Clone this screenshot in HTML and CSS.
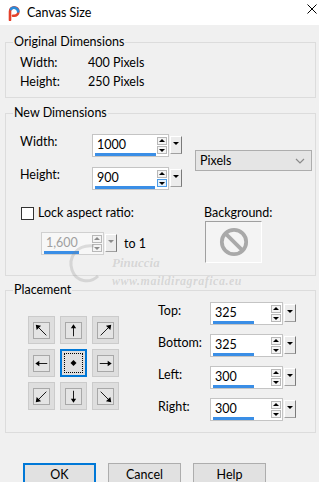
FILE: index.html
```html
<html>
  <head>
    <meta name="viewport" content="width=device-width, initial-scale=1" />
    <link rel="stylesheet" href="styles.css">
  </head>
  <body>
    <div class="dialog">
      <div class="titlebar">
        <svg class="app-icon" viewBox="0 0 13 16">
          <path d="M3 15 V6.5 a4.2 4.2 0 1 1 4.2 4.2 H6" fill="none" stroke="#e4412b" stroke-width="2.6" stroke-linecap="round"/>
          <path d="M4 4 a4.2 4.2 0 0 1 7.2 2.5" fill="none" stroke="#2a8ad8" stroke-width="2.6" stroke-linecap="round"/>
        </svg>
        <span class="title">Canvas Size</span>
        <svg class="close" viewBox="0 0 10 10">
          <path d="M0.5 0.5 L9.5 9.5 M9.5 0.5 L0.5 9.5" stroke="#000" stroke-width="1"/>
        </svg>
      </div>

      <fieldset class="group group-original">
        <legend>Original Dimensions</legend>
        <div class="info-grid">
          <span>Width:</span><span>400 Pixels</span>
          <span>Height:</span><span>250 Pixels</span>
        </div>
      </fieldset>

      <fieldset class="group group-new">
        <legend>New Dimensions</legend>
        <div class="size-grid">
          <span class="field-label">Width:</span>
          <div class="spin">
            <div class="spin-field">
              <div class="spin-main">
                <span class="spin-value">1000</span>
                <span class="spin-bar" style="width: 61px"></span>
              </div>
              <span class="spin-arrows"><i class="arrow-up"></i><i class="arrow-down"></i></span>
            </div>
            <span class="spin-drop"><i></i></span>
          </div>
          <div class="select">
            <span>Pixels</span>
            <svg class="chevron" viewBox="0 0 10 6"><path d="M1 1 L5 5 L9 1" fill="none" stroke="#8a8a8a" stroke-width="1.2"/></svg>
          </div>
          <span class="field-label">Height:</span>
          <div class="spin">
            <div class="spin-field">
              <div class="spin-main">
                <span class="spin-value">900</span>
                <span class="spin-bar" style="width: 60px"></span>
              </div>
              <span class="spin-arrows"><i class="arrow-up"></i><i class="arrow-down hot"></i></span>
            </div>
            <span class="spin-drop"><i></i></span>
          </div>
        </div>

        <div class="aspect-row">
          <div class="aspect">
            <div class="check"><span class="check-box"></span><span>Lock aspect ratio:</span></div>
            <div class="ratio">
              <div class="spin spin-disabled">
                <div class="spin-field">
                  <div class="spin-main">
                    <span class="spin-value">1,600</span>
                    <span class="spin-bar" style="width: 35px"></span>
                  </div>
                  <span class="spin-arrows"><i class="arrow-up"></i><i class="arrow-down"></i></span>
                </div>
                <span class="spin-drop"><i></i></span>
              </div>
              <span>to 1</span>
            </div>
          </div>
          <div class="background">
            <span>Background:</span>
            <div class="swatch">
              <svg viewBox="0 0 32 32" class="no-sign">
                <circle cx="16" cy="16" r="13" fill="none" stroke="#a9a9a9" stroke-width="4"/>
                <path d="M7 7 L25 25" stroke="#a9a9a9" stroke-width="4"/>
              </svg>
            </div>
          </div>
        </div>
      </fieldset>

      <fieldset class="group group-placement">
        <legend>Placement</legend>
        <div class="placement">
          <div class="anchor-grid">
            <div class="anchor"><span class="anchor-inner"><svg viewBox="0 0 17 17"><path d="M14 14 L3 3" stroke="#000"/><path d="M2 2 L8 3 L3 8 Z" fill="#000"/></svg></span></div>
            <div class="anchor"><span class="anchor-inner"><svg viewBox="0 0 17 17"><path d="M8.5 15 L8.5 4" stroke="#000"/><path d="M8.5 1.5 L11.5 6 L5.5 6 Z" fill="#000"/></svg></span></div>
            <div class="anchor"><span class="anchor-inner"><svg class="rot-90" viewBox="0 0 17 17"><path d="M14 14 L3 3" stroke="#000"/><path d="M2 2 L8 3 L3 8 Z" fill="#000"/></svg></span></div>
            <div class="anchor"><span class="anchor-inner"><svg class="rot-270" viewBox="0 0 17 17"><path d="M8.5 15 L8.5 4" stroke="#000"/><path d="M8.5 1.5 L11.5 6 L5.5 6 Z" fill="#000"/></svg></span></div>
            <div class="anchor selected"><span class="anchor-inner"><svg viewBox="0 0 17 17"><path d="M8.5 5.5 L11.5 8.5 L8.5 11.5 L5.5 8.5 Z" fill="#000"/></svg></span></div>
            <div class="anchor"><span class="anchor-inner"><svg class="rot-90" viewBox="0 0 17 17"><path d="M8.5 15 L8.5 4" stroke="#000"/><path d="M8.5 1.5 L11.5 6 L5.5 6 Z" fill="#000"/></svg></span></div>
            <div class="anchor"><span class="anchor-inner"><svg class="rot-270" viewBox="0 0 17 17"><path d="M14 14 L3 3" stroke="#000"/><path d="M2 2 L8 3 L3 8 Z" fill="#000"/></svg></span></div>
            <div class="anchor"><span class="anchor-inner"><svg class="rot-180" viewBox="0 0 17 17"><path d="M8.5 15 L8.5 4" stroke="#000"/><path d="M8.5 1.5 L11.5 6 L5.5 6 Z" fill="#000"/></svg></span></div>
            <div class="anchor"><span class="anchor-inner"><svg class="rot-180" viewBox="0 0 17 17"><path d="M14 14 L3 3" stroke="#000"/><path d="M2 2 L8 3 L3 8 Z" fill="#000"/></svg></span></div>
          </div>

          <div class="offsets">
            <span class="field-label">Top:</span>
            <div class="spin">
              <div class="spin-field">
                <div class="spin-main"><span class="spin-value">325</span><span class="spin-bar" style="width: 41px"></span></div>
                <span class="spin-arrows"><i class="arrow-up"></i><i class="arrow-down"></i></span>
              </div>
              <span class="spin-drop"><i></i></span>
            </div>
            <span class="field-label">Bottom:</span>
            <div class="spin">
              <div class="spin-field">
                <div class="spin-main"><span class="spin-value">325</span><span class="spin-bar" style="width: 41px"></span></div>
                <span class="spin-arrows"><i class="arrow-up"></i><i class="arrow-down"></i></span>
              </div>
              <span class="spin-drop"><i></i></span>
            </div>
            <span class="field-label">Left:</span>
            <div class="spin">
              <div class="spin-field">
                <div class="spin-main"><span class="spin-value">300</span><span class="spin-bar" style="width: 41px"></span></div>
                <span class="spin-arrows"><i class="arrow-up"></i><i class="arrow-down"></i></span>
              </div>
              <span class="spin-drop"><i></i></span>
            </div>
            <span class="field-label">Right:</span>
            <div class="spin">
              <div class="spin-field">
                <div class="spin-main"><span class="spin-value">300</span><span class="spin-bar" style="width: 41px"></span></div>
                <span class="spin-arrows"><i class="arrow-up"></i><i class="arrow-down"></i></span>
              </div>
              <span class="spin-drop"><i></i></span>
            </div>
          </div>
        </div>
      </fieldset>

      <div class="actions">
        <button class="btn btn-default">OK</button>
        <button class="btn">Cancel</button>
        <button class="btn">Help</button>
      </div>

      <div class="watermark">
        <svg class="wm-mark" viewBox="0 0 40 50"><path d="M30 6 C12 4 4 18 8 30 C12 42 26 44 34 36" fill="none" stroke="currentColor" stroke-width="3"/></svg>
        <span class="wm-name">Pinuccia</span>
        <span class="wm-url">www.maildiragrafica.eu</span>
      </div>
    </div>
  </body>
</html>
```

FILE: styles.css
```css
body {
  margin: 0;
  background: #f0f0f0;
  font-family: Lato, "Noto Sans", "Liberation Sans", sans-serif;
  font-size: 12.5px;
  color: #000;
}
.dialog {
  position: relative;
  width: 319px;
  height: 482px;
  overflow: hidden;
  background: #f0f0f0;
}

/* title bar */
.titlebar {
  height: 25px;
  background: #fff;
  display: flex;
  align-items: center;
  padding-left: 7px;
}
.app-icon {
  width: 13px;
  height: 16px;
  margin-right: 7px;
}
.title {
  flex: 1;
}
.close {
  width: 10px;
  height: 10px;
  margin-right: 2px;
  align-self: flex-start;
  margin-top: 4px;
}

/* group boxes */
.group {
  margin: 9px 3px 0 5px;
  border: 1px solid #dcdcdc;
  padding: 3px 2px 6px 14px;
  min-width: 0;
}
.group legend {
  padding: 0 1px;
  margin-left: -7px;
  line-height: 16px;
}
.group-new {
  margin-top: 7px;
  padding-bottom: 12px;
}
.group-placement {
  margin-top: 6px;
  padding-bottom: 11px;
}

.info-grid {
  display: grid;
  grid-template-columns: 68px auto;
  line-height: 19px;
}

.field-label {
  line-height: 16px;
  align-self: start;
}

/* spin control */
.spin {
  display: flex;
  align-items: flex-start;
  height: 23px;
}
.spin-field {
  flex: 1;
  display: flex;
  height: 21px;
  background: #fff;
  border: 1px solid #c4c4c4;
}
.spin-main {
  flex: 1;
  display: flex;
  flex-direction: column;
  padding: 2px 0 0 2px;
}
.spin-value {
  line-height: 16px;
  padding-left: 2px;
}
.spin-bar {
  height: 3px;
  background: #3a8ee6;
}
.spin-arrows {
  width: 10px;
  display: flex;
  flex-direction: column;
  gap: 1px;
  padding: 2px 1px 0 0;
}
.spin-arrows i {
  position: relative;
  height: 6px;
  border: 1px solid #b8b8b8;
  background: #f4f4f4;
}
.spin-arrows i::after {
  content: "";
  position: absolute;
  left: 1px;
  border-left: 3px solid transparent;
  border-right: 3px solid transparent;
}
.spin-arrows .arrow-up::after {
  top: 1px;
  border-bottom: 3px solid #000;
}
.spin-arrows .arrow-down::after {
  top: 2px;
  border-top: 3px solid #000;
}
.spin-arrows .hot {
  border-color: #4a9be8;
  background: #e5f1fb;
}
.spin-drop {
  position: relative;
  width: 10px;
  height: 16px;
  margin: 2px 0 0 1px;
  background: #ececec;
  border-top: 1px solid #fff;
  border-left: 1px solid #fff;
  border-right: 1px solid #7a7a7a;
  border-bottom: 1px solid #a0a0a0;
}
.spin-drop i {
  position: absolute;
  left: 2px;
  top: 5px;
  border-left: 3px solid transparent;
  border-right: 3px solid transparent;
  border-top: 3px solid #000;
}
.spin-disabled .spin-field {
  background: #f7f7f7;
  border-color: #d0d0d0;
}
.spin-disabled .spin-value {
  color: #a0a0a0;
}
.spin-disabled .spin-arrows .arrow-up::after {
  border-bottom-color: #8c8c8c;
}
.spin-disabled .spin-arrows .arrow-down::after,
.spin-disabled .spin-drop i {
  border-top-color: #8c8c8c;
}

/* new dimensions */
.size-grid {
  display: grid;
  grid-template-columns: 72px 90px 130px;
  grid-template-rows: 23px 23px;
  row-gap: 10px;
  margin-top: 10px;
}
.select {
  grid-column: 3;
  grid-row: 1 / 3;
  align-self: start;
  margin: 16px 0 0 13px;
  height: 19px;
  display: flex;
  align-items: center;
  justify-content: space-between;
  padding: 0 6px 0 4px;
  background: #e5e5e5;
  border: 1px solid #adadad;
}
.chevron {
  width: 10px;
  height: 6px;
}

.aspect-row {
  display: flex;
  margin-top: 15px;
}
.aspect {
  width: 184px;
}
.check {
  display: flex;
  align-items: center;
  gap: 4px;
  line-height: 16px;
  margin-left: 1px;
}
.check-box {
  width: 11px;
  height: 11px;
  border: 1px solid #333;
  background: #fff;
}
.ratio {
  display: flex;
  align-items: center;
  gap: 7px;
  margin: 11px 0 0 21px;
}
.ratio .spin {
  width: 76px;
}
.background {
  display: flex;
  flex-direction: column;
  line-height: 16px;
}
.swatch {
  width: 55px;
  height: 40px;
  margin-left: 1px;
  display: flex;
  align-items: center;
  justify-content: center;
  background: #f4f4f4;
  border-top: 1px solid #a0a0a0;
  border-left: 1px solid #a0a0a0;
  border-right: 1px solid #fff;
  border-bottom: 1px solid #fff;
}
.no-sign {
  width: 30px;
  height: 30px;
}

/* placement */
.placement {
  display: flex;
  align-items: flex-start;
}
.anchor-grid {
  display: grid;
  grid-template-columns: repeat(3, 27px);
  grid-auto-rows: 28px;
  gap: 5px;
  margin: 15px 0 0 8px;
}
.anchor {
  box-sizing: border-box;
  display: flex;
  align-items: center;
  justify-content: center;
  background: #dedede;
  border: 1px solid #cbcbcb;
}
.anchor-inner {
  box-sizing: border-box;
  width: 17px;
  height: 17px;
  background: #e4e4e4;
  border: 1px solid #a8a8a8;
}
.anchor-inner svg {
  display: block;
  width: 15px;
  height: 15px;
}
.rot-90 { transform: rotate(90deg); }
.rot-180 { transform: rotate(180deg); }
.rot-270 { transform: rotate(270deg); }
.anchor.selected {
  border: 2px solid #0078d7;
}
.anchor.selected .anchor-inner {
  width: 19px;
  height: 20px;
  border: 1px dotted #000;
  background: #e0e0e0;
}
.anchor.selected svg {
  width: 17px;
  height: 18px;
}

.offsets {
  display: grid;
  grid-template-columns: 52px 86px;
  grid-auto-rows: 23px;
  row-gap: 9px;
  margin: 1px 0 0 39px;
}
.offsets .field-label {
  padding-top: 1px;
}

/* buttons */
.actions {
  display: flex;
  gap: 12px;
  margin-top: 30px;
  padding-left: 23px;
}
.btn {
  width: 73px;
  height: 23px;
  padding: 0;
  font-family: inherit;
  font-size: 12.5px;
  color: #000;
  background: #e1e1e1;
  border: 1px solid #adadad;
}
.btn-default {
  border-color: #0078d7;
  box-shadow: inset 0 0 0 1px #0078d7;
}

/* watermark over the dialog */
.watermark {
  position: absolute;
  left: 64px;
  top: 238px;
  width: 200px;
  height: 60px;
  color: rgba(130, 130, 130, 0.24);
  font-family: "Liberation Serif", serif;
  font-weight: bold;
  font-style: italic;
  pointer-events: none;
}
.wm-mark {
  position: absolute;
  left: 0;
  top: 2px;
  width: 40px;
  height: 50px;
}
.wm-name {
  position: absolute;
  left: 48px;
  top: 17px;
  font-size: 13px;
}
.wm-url {
  position: absolute;
  left: 48px;
  top: 36px;
  font-size: 12px;
  letter-spacing: 0.5px;
}
```
